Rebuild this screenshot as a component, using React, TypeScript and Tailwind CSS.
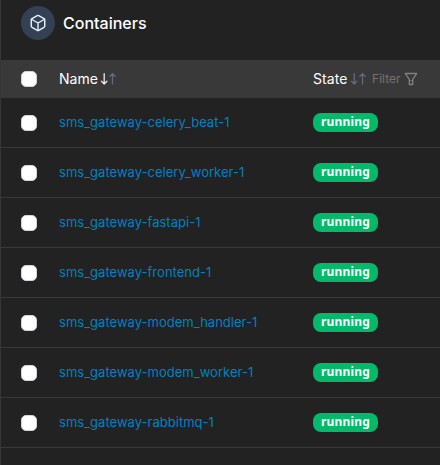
const containers = [
  'sms_gateway-celery_beat-1',
  'sms_gateway-celery_worker-1',
  'sms_gateway-fastapi-1',
  'sms_gateway-frontend-1',
  'sms_gateway-modem_handler-1',
  'sms_gateway-modem_worker-1',
  'sms_gateway-rabbitmq-1',
];

function Checkbox() {
  return <span className="block size-4 shrink-0 rounded-[5px] border border-[#d0d5dd] bg-white" />;
}

function BoxIcon() {
  return (
    <svg width="18" height="18" viewBox="0 0 24 24" fill="none" stroke="#e0f2fe" strokeWidth="1.9" strokeLinecap="round" strokeLinejoin="round">
      <path d="M21 8a2 2 0 0 0-1-1.73l-7-4a2 2 0 0 0-2 0l-7 4A2 2 0 0 0 3 8v8a2 2 0 0 0 1 1.73l7 4a2 2 0 0 0 2 0l7-4A2 2 0 0 0 21 16Z" />
      <path d="m3.3 7 8.7 5 8.7-5M12 22V12" />
    </svg>
  );
}

function SortArrows({ active = false }: { active?: boolean }) {
  return (
    <svg className="ml-px shrink-0" width="17" height="14" viewBox="0 0 17 14" fill="none" strokeWidth="1.3" strokeLinecap="round" strokeLinejoin="round">
      <path d="M5.2 1.7v10.3M2.5 9.3l2.7 2.7 2.7-2.7" stroke={active ? '#e8e8e8' : '#5f6b80'} />
      <path d="M13.5 12V1.7M10.8 4.4l2.7-2.7 2.7 2.7" stroke="#5f6b80" />
    </svg>
  );
}

export default function App() {
  return (
    <div className="h-[465px] w-[440px] overflow-hidden border-l border-[#363636] bg-[#222222] font-['Inter',sans-serif] text-white">
      <div className="flex h-[60px] items-start gap-2 pt-1.5 pl-5">
        <div className="flex size-[34px] items-center justify-center rounded-full bg-[#344054]">
          <BoxIcon />
        </div>
        <h1 className="text-base leading-[34px] font-medium">Containers</h1>
      </div>
      <div className="flex h-[38px] items-center bg-[#393939] pl-5 text-sm">
        <Checkbox />
        <div className="ml-[22px] flex w-[254px] items-center">
          Name
          <SortArrows active />
        </div>
        <div className="flex items-center">
          <span className="tracking-[0.1px]">State</span>
          <SortArrows />
          <span className="ml-[6.5px] text-xs text-[#737373]">Filter</span>
          <svg className="ml-[3px]" width="14" height="14" viewBox="0 0 14 14" fill="none" stroke="#808080" strokeWidth="1.3" strokeLinejoin="round">
            <path d="M1.3 1.5h11.4L8.7 7.4v5.1H5.3V7.4z" />
            <path d="M5.3 8.7h3.4" strokeWidth="0.8" />
          </svg>
        </div>
      </div>
      {containers.map((name) => (
        <div key={name} className="flex h-[50px] items-center border-b border-[#3a3a3a] pl-5">
          <Checkbox />
          <a className="ml-[22px] w-[254px] text-[13px] tracking-[0.02px] text-[#0080c0]">{name}</a>
          <span className="flex h-[19px] w-[65px] items-center justify-center rounded-[8px] bg-[#00b96b] pb-0.5 font-['Noto_Sans',sans-serif] text-xs leading-[17px] font-bold tracking-[0.15px]">
            running
          </span>
        </div>
      ))}
    </div>
  );
}
